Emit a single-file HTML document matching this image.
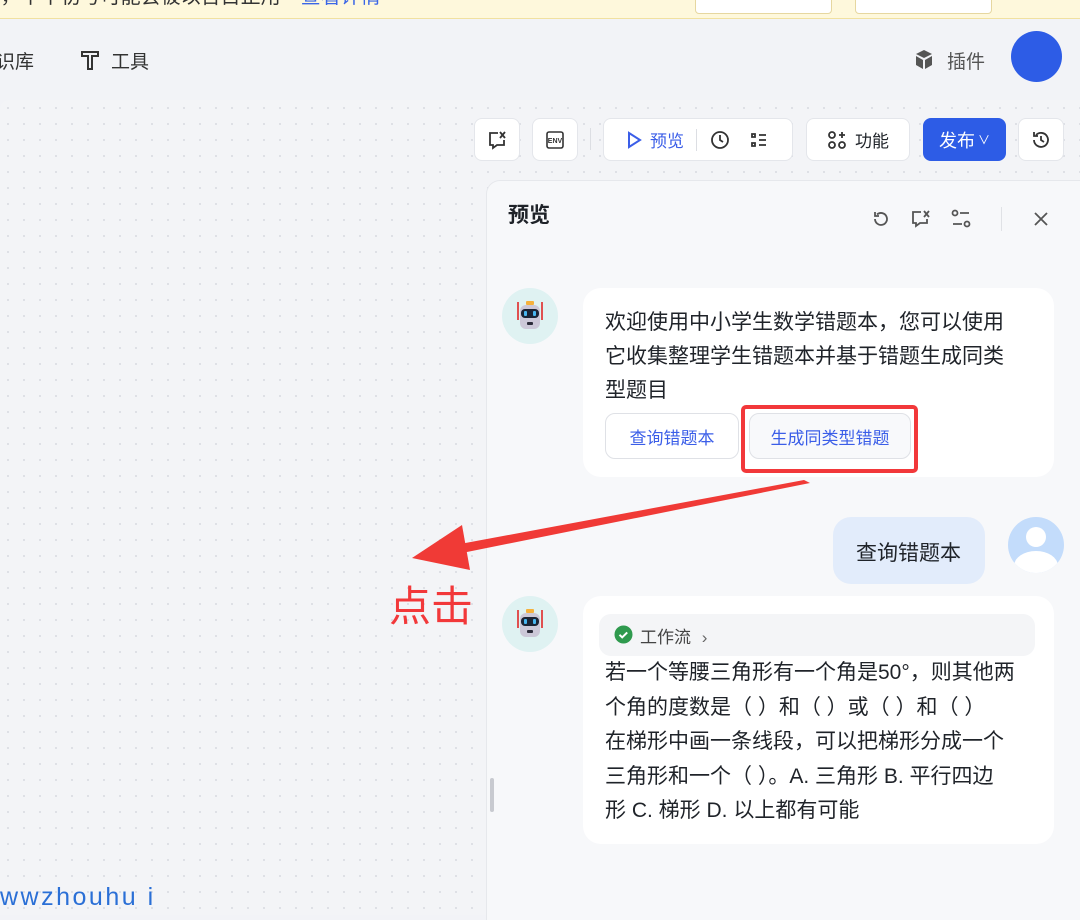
<!DOCTYPE html>
<html><head><meta charset="utf-8"><style>
*{margin:0;padding:0;box-sizing:border-box}
body{width:1080px;height:915px;overflow:hidden;position:relative;background:#f2f3f7;font-family:"Liberation Sans","Noto Sans CJK SC",sans-serif;color:#1f2329}
.abs{position:absolute}
.banner{left:0;top:0;width:1080px;height:19px;background:#fef8dc;border-bottom:1px solid #f1e1a0;overflow:hidden}
.canvas{left:0;top:100px;width:1080px;height:815px;background-color:#f3f4f7;background-image:radial-gradient(#dcdee4 1px,transparent 1.2px);background-size:16px 16px;border-radius:8px 0 0 0}
.tb{top:118px;height:43px;background:#fff;border:1px solid #e4e6eb;border-radius:8px;display:flex;align-items:center;justify-content:center;font-size:17px}
.panel{left:486px;top:180px;width:600px;height:740px;background:#f7f8fa;border-radius:14px 0 0 0;border-left:1px solid #e6e8ec;border-top:1px solid #e6e8ec}
.bubble{background:#fff;border-radius:18px}
.av{width:56px;height:56px;border-radius:50%;background:#dff2f2}
.txt{font-size:21px;line-height:34px;color:#1f2329}
.btn{height:46px;border:1px solid #dfe1e6;border-radius:10px;background:#fff;color:#3b5ee8;font-size:17px;display:flex;align-items:center;justify-content:center}
</style></head><body>
<div class="abs banner">
 <div class="abs" style="left:-6px;top:-20px;font-size:20px;color:#333;white-space:nowrap">)，中中初号可能会被以告目正用　<span style="color:#3b66e6">查看详情</span></div>
 <div class="abs" style="left:695px;top:-10px;width:137px;height:24px;background:#fff;border:1px solid #e6d7a0;border-radius:4px"></div>
 <div class="abs" style="left:855px;top:-10px;width:137px;height:24px;background:#fff;border:1px solid #e6d7a0;border-radius:4px"></div>
</div>
<div class="abs" style="left:-4px;top:47px;font-size:19px;color:#333">识库</div>
<svg class="abs" style="left:80px;top:49px" width="20" height="22" viewBox="0 0 20 22" fill="none" stroke="#333" stroke-width="2"><path d="M2 3h16v4H12v13H8V7H2z"/></svg>
<div class="abs" style="left:111px;top:47px;font-size:19px;color:#333">工具</div>
<svg class="abs" style="left:914px;top:49px" width="20" height="21" viewBox="0 0 20 21"><path d="M10 1l8 4-8 4-8-4z" fill="#555"/><path d="M2 7l7 4v9l-7-4z M18 7l-7 4v9l7-4z" fill="#555"/></svg>
<div class="abs" style="left:947px;top:47px;font-size:19px;color:#555">插件</div>
<div class="abs" style="left:1011px;top:31px;width:51px;height:51px;border-radius:50%;background:#2d5ce6"></div>

<div class="abs canvas"></div>
<div class="abs tb" style="left:474px;width:46px"><svg width="22" height="22" viewBox="0 0 22 22" fill="none" stroke="#333" stroke-width="1.8"><path d="M12 4H4v12h3v3l4-3h7v-5"/><path d="M14 3l5 6M19 3l-5 6"/></svg></div>
<div class="abs tb" style="left:532px;width:46px"><svg width="22" height="22" viewBox="0 0 22 22" fill="none" stroke="#333" stroke-width="1.6"><rect x="3" y="3" width="16" height="16" rx="2"/><text x="11" y="14" font-size="7" text-anchor="middle" fill="#333" stroke="none" font-family="Liberation Sans" font-weight="bold">ENV</text></svg></div>
<div class="abs" style="left:590px;top:128px;width:1px;height:22px;background:#dcdee3"></div>
<div class="abs tb" style="left:603px;width:190px;justify-content:flex-start;padding-left:22px">
 <svg width="16" height="18" viewBox="0 0 16 18" fill="none" stroke="#3b5ee8" stroke-width="2"><path d="M3 2l11 7-11 7z"/></svg>
 <span style="color:#3b5ee8;margin-left:8px">预览</span>
 <span style="width:1px;height:22px;background:#dcdee3;margin:0 12px"></span>
 <svg width="22" height="22" viewBox="0 0 22 22" fill="none" stroke="#333" stroke-width="1.8"><circle cx="11" cy="11" r="8"/><path d="M11 6v5l3 2"/></svg>
 <svg style="margin-left:18px" width="20" height="20" viewBox="0 0 20 20" fill="none" stroke="#333" stroke-width="1.8"><path d="M3 4h3v3H3zM3 13h3v3H3zM10 5h7M10 10h7M10 15h7"/></svg>
</div>
<div class="abs tb" style="left:806px;width:104px"><svg width="20" height="20" viewBox="0 0 20 20" fill="none" stroke="#333" stroke-width="1.8"><circle cx="5" cy="5" r="3"/><circle cx="5" cy="15" r="3"/><circle cx="15" cy="15" r="3"/><path d="M15 2v6M12 5h6"/></svg><span style="margin-left:8px">功能</span></div>
<div class="abs tb" style="left:923px;width:83px;background:#2d5ce6;border-color:#2d5ce6;color:#fff;font-size:18px">发布<span style="font-size:12px;margin-left:3px">∨</span></div>
<div class="abs tb" style="left:1018px;width:46px"><svg width="22" height="22" viewBox="0 0 22 22" fill="none" stroke="#333" stroke-width="1.8"><path d="M4 11a7 7 0 1 0 2-5M4 3v4h4"/><path d="M11 7v4l3 2"/></svg></div>

<div class="abs panel"></div>
<div class="abs" style="left:508px;top:199px;font-size:21px;font-weight:bold">预览</div>
<svg class="abs" style="left:870px;top:208px" width="22" height="22" viewBox="0 0 22 22" fill="none" stroke="#555" stroke-width="1.8"><path d="M5 11a6 6 0 1 0 2-4.5M5 4v4h4"/></svg>
<svg class="abs" style="left:910px;top:208px" width="22" height="22" viewBox="0 0 22 22" fill="none" stroke="#555" stroke-width="1.8"><path d="M11 4H3v11h3v3l4-3h7v-4"/><path d="M14 3l5 6M19 3l-5 6"/></svg>
<svg class="abs" style="left:950px;top:208px" width="22" height="22" viewBox="0 0 22 22" fill="none" stroke="#555" stroke-width="1.8"><circle cx="5" cy="5" r="2.5"/><path d="M10 5h9M3 16h9"/><circle cx="17" cy="16" r="2.5"/></svg>
<div class="abs" style="left:1001px;top:207px;width:1px;height:24px;background:#e0e2e6"></div>
<svg class="abs" style="left:1033px;top:211px" width="16" height="16" viewBox="0 0 16 16" stroke="#555" stroke-width="1.8"><path d="M2 2l12 12M14 2L2 14"/></svg>

<div class="abs av" style="left:502px;top:288px"></div>
<svg class="abs" style="left:512px;top:298px" width="36" height="36" viewBox="0 0 36 36"><rect x="14" y="3" width="8" height="4" rx="1" fill="#f5b13d"/><line x1="6" y1="4" x2="6" y2="22" stroke="#e05050" stroke-width="2"/><line x1="30" y1="4" x2="30" y2="22" stroke="#e05050" stroke-width="2"/><rect x="8" y="7" width="20" height="24" rx="6" fill="#ccc8d8"/><rect x="9" y="11" width="18" height="9" rx="4" fill="#1b2436"/><rect x="12" y="13" width="3" height="5" rx="1" fill="#49b6f0"/><rect x="21" y="13" width="3" height="5" rx="1" fill="#49b6f0"/><rect x="15" y="24" width="6" height="3" rx="1" fill="#2b2b3a"/></svg>
<div class="abs bubble" style="left:583px;top:288px;width:471px;height:189px"></div>
<div class="abs txt" style="left:605px;top:306px;width:412px">欢迎使用中小学生数学错题本，您可以使用它收集整理学生错题本并基于错题生成同类型题目</div>
<div class="abs btn" style="left:605px;top:413px;width:134px">查询错题本</div>
<div class="abs btn" style="left:749px;top:413px;width:162px;background:#f8f9fb">生成同类型错题</div>
<div class="abs" style="left:741px;top:405px;width:177px;height:68px;border:4px solid #f2383a;border-radius:5px"></div>

<svg class="abs" style="left:400px;top:475px" width="410" height="100" viewBox="0 0 410 100"><path d="M404 5 L60 69 L62 78 L410 8 Z" fill="#f03a36"/><path d="M12 83 L62 50 L70 95 Z" fill="#f03a36"/></svg>
<div class="abs" style="left:389px;top:582px;font-size:42px;color:#f2383a;line-height:50px">点击</div>

<div class="abs bubble" style="left:833px;top:517px;width:152px;height:67px;background:#e2ecfb"></div>
<div class="abs" style="left:856px;top:537px;font-size:21px">查询错题本</div>
<div class="abs" style="left:1008px;top:517px;width:56px;height:56px;border-radius:50%;background:#c3dcfb;overflow:hidden"><div class="abs" style="left:18px;top:10px;width:20px;height:20px;border-radius:50%;background:#fff"></div><div class="abs" style="left:6px;top:34px;width:44px;height:30px;border-radius:50%;background:#fff"></div></div>

<div class="abs av" style="left:502px;top:596px"></div>
<svg class="abs" style="left:512px;top:606px" width="36" height="36" viewBox="0 0 36 36"><rect x="14" y="3" width="8" height="4" rx="1" fill="#f5b13d"/><line x1="6" y1="4" x2="6" y2="22" stroke="#e05050" stroke-width="2"/><line x1="30" y1="4" x2="30" y2="22" stroke="#e05050" stroke-width="2"/><rect x="8" y="7" width="20" height="24" rx="6" fill="#ccc8d8"/><rect x="9" y="11" width="18" height="9" rx="4" fill="#1b2436"/><rect x="12" y="13" width="3" height="5" rx="1" fill="#49b6f0"/><rect x="21" y="13" width="3" height="5" rx="1" fill="#49b6f0"/><rect x="15" y="24" width="6" height="3" rx="1" fill="#2b2b3a"/></svg>
<div class="abs bubble" style="left:583px;top:596px;width:471px;height:248px"></div>
<div class="abs" style="left:599px;top:614px;width:436px;height:42px;border-radius:12px;background:#f4f5f7"></div>
<svg class="abs" style="left:614px;top:625px" width="19" height="19" viewBox="0 0 19 19"><circle cx="9.5" cy="9.5" r="9" fill="#2f9a4e"/><path d="M5.5 9.8l2.7 2.6 5-5" stroke="#fff" stroke-width="2" fill="none"/></svg>
<div class="abs" style="left:640px;top:623px;font-size:17px;color:#444">工作流 <span style="margin-left:6px;color:#666">›</span></div>
<div class="abs txt" style="left:605px;top:656px;white-space:nowrap;line-height:34.5px">若一个等腰三角形有一个角是50°，则其他两<br>个角的度数是（ ）和（ ）或（ ）和（ ）<br>在梯形中画一条线段，可以把梯形分成一个<br>三角形和一个（ ）。A. 三角形 B. 平行四边<br>形 C. 梯形 D. 以上都有可能</div>
<div class="abs" style="left:490px;top:778px;width:4px;height:34px;border-radius:2px;background:#c8cad0"></div>

<div class="abs" style="left:0;top:882px;font-size:25px;color:#2a6fd6;letter-spacing:2.5px;line-height:30px">wwzhouhu i</div>
</body></html>
